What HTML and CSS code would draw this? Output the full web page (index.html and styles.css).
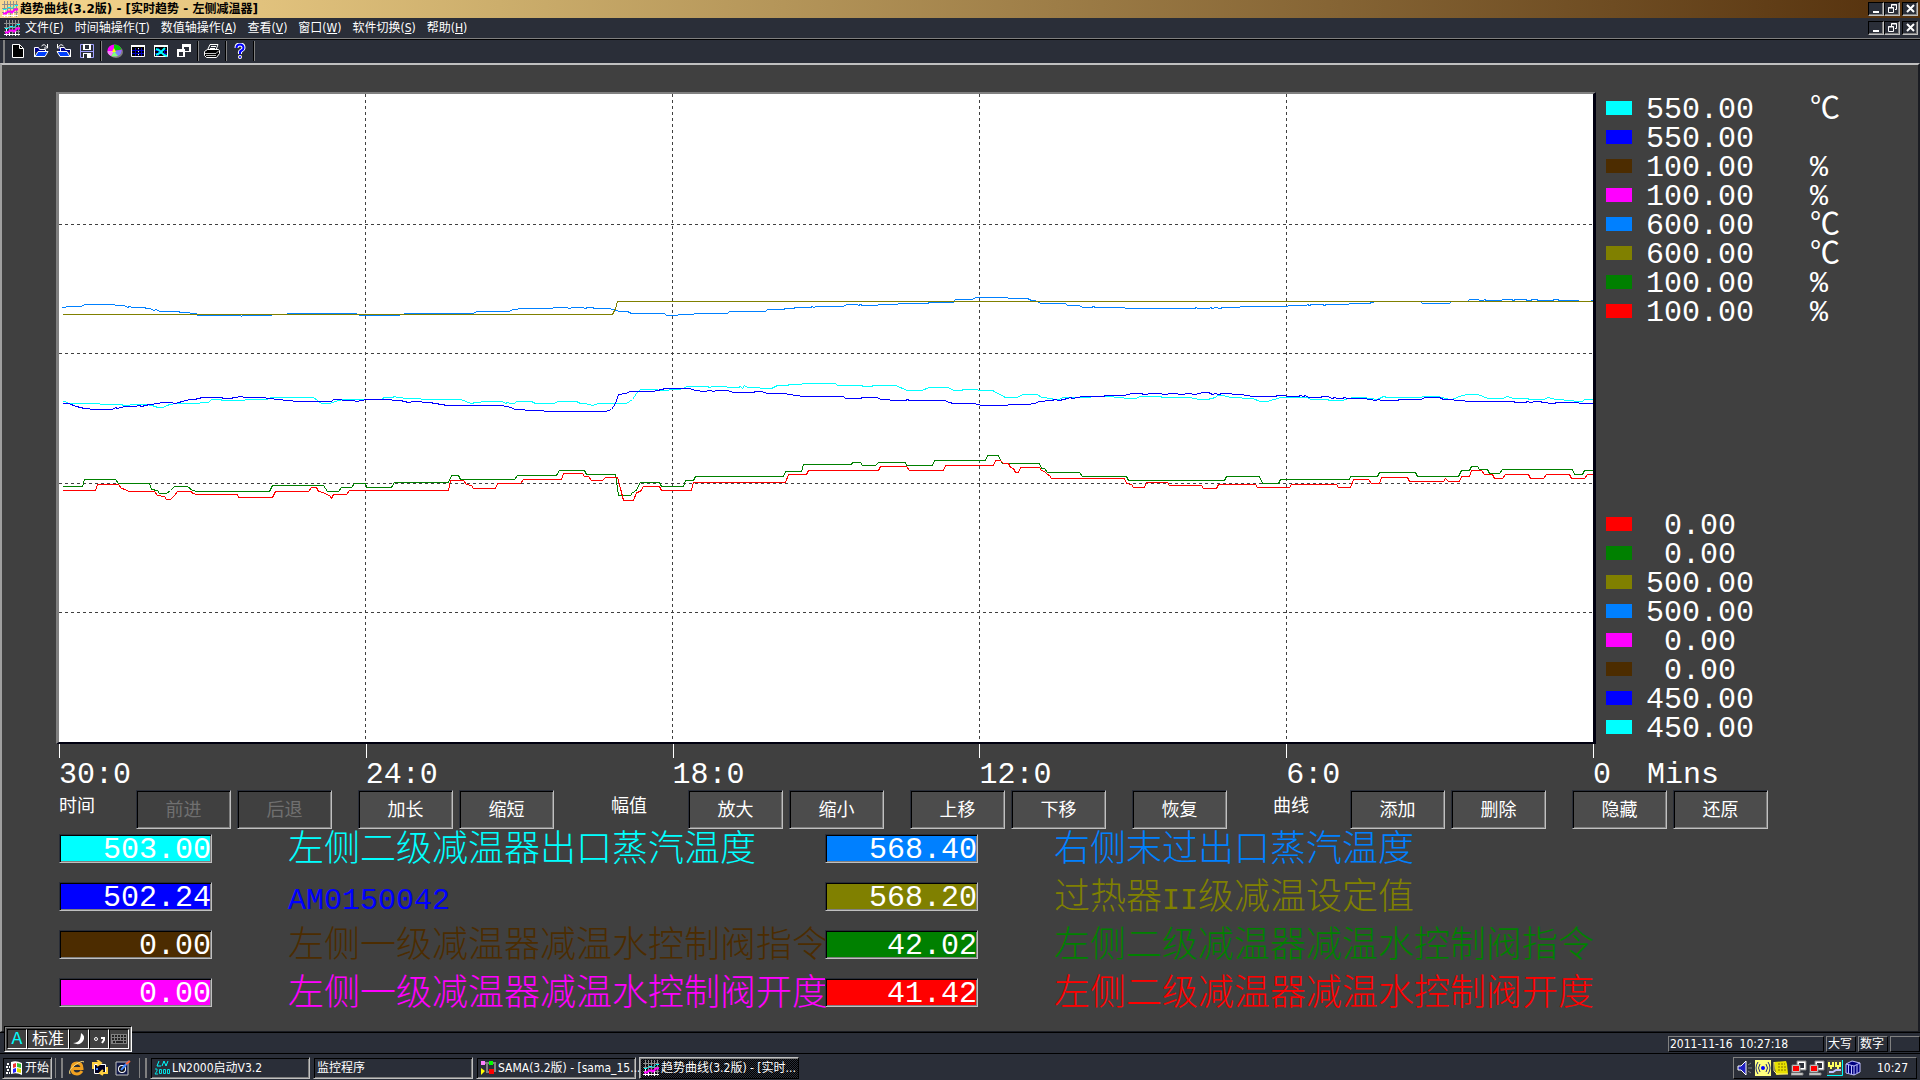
FILE: index.html
```html
<!DOCTYPE html>
<html lang="zh-CN">
<head>
    <meta charset="UTF-8">
    <meta name="viewport" content="width=device-width, initial-scale=1.0">
    <title>趋势曲线(3.2版) - [实时趋势 - 左侧减温器]</title>
    <link rel="stylesheet" href="styles.css">
</head>
<body>

    <!-- Shared icons -->
    <svg class="defs" aria-hidden="true">
        <symbol id="i-trend" viewBox="0 0 16 16">
            <path d="M0 3.500h16M0 7.500h16M0 11.500h16M0 14.500h16" stroke="#909090"/>
            <path d="M2.500 0v16M5.500 0v16M8.500 0v16M11.500 0v16M14.500 0v16" stroke="#909090"/>
            <path d="M0 14.500h16M2.500 8v8M5.500 10v6M11.500 10v6" stroke="#fff"/>
            <path d="M1 8.500h3l2-2h3l1 1 3-3h3" stroke="#00ffff" fill="none"/>
            <path d="M1 12.500h3l2-2h3l1 1 3-3h3" stroke="#ff00ff" stroke-width="2" fill="none"/>
        </symbol>
        <symbol id="i-min" viewBox="0 0 12 10">
            <path d="M2 8h6" stroke="#fff" stroke-width="2"/>
        </symbol>
        <symbol id="i-restore" viewBox="0 0 12 10">
            <path d="M4.500 3V.5h5v5H8M4 1h6" stroke="#fff" fill="none"/>
            <path d="M1.500 3.500h5v5h-5zM1 4h6" stroke="#fff" fill="none"/>
        </symbol>
        <symbol id="i-close" viewBox="0 0 12 10">
            <path d="M2 1l7 7M9 1L2 8" stroke="#fff" stroke-width="2"/>
        </symbol>
        <symbol id="i-pc" viewBox="0 0 16 16">
            <path d="M6 1h9v9H6z" fill="#fff" stroke="#808080"/>
            <path d="M8 3h5v5H8z" fill="#2a2e38"/>
            <path d="M1 5h8v7H1zM0 13h12v2H0z" fill="#fff" stroke="#808080"/>
            <path d="M2 6h6v5H2z" fill="#f00"/>
        </symbol>
    </svg>

    <header class="titlebar">
        <svg class="icon"><use href="#i-trend"/></svg>
        <h1>趋势曲线(3.2版) - [实时趋势 - 左侧减温器]</h1>
        <div class="window-buttons">
            <button class="bevel" aria-label="最小化"><svg><use href="#i-min"/></svg></button>
            <button class="bevel" aria-label="还原"><svg><use href="#i-restore"/></svg></button>
            <button class="bevel close" aria-label="关闭"><svg><use href="#i-close"/></svg></button>
        </div>
    </header>

    <nav class="menubar">
        <svg class="icon"><use href="#i-trend"/></svg>
        <button>文件(<u>F</u>)</button>
        <button>时间轴操作(<u>T</u>)</button>
        <button>数值轴操作(<u>A</u>)</button>
        <button>查看(<u>V</u>)</button>
        <button>窗口(<u>W</u>)</button>
        <button>软件切换(<u>S</u>)</button>
        <button>帮助(<u>H</u>)</button>
        <div class="window-buttons">
            <button class="bevel" aria-label="最小化子窗口"><svg><use href="#i-min"/></svg></button>
            <button class="bevel" aria-label="还原子窗口"><svg><use href="#i-restore"/></svg></button>
            <button class="bevel close" aria-label="关闭子窗口"><svg><use href="#i-close"/></svg></button>
        </div>
    </nav>

    <div class="toolbar">
        <button aria-label="新建">
            <svg viewBox="0 0 16 16"><path d="M2.500 1.500h7l4 4v9h-11z" fill="#000" stroke="#fff"/><path d="M9.500 1.500v4h4" fill="none" stroke="#fff"/></svg>
        </button>
        <button aria-label="打开">
            <svg viewBox="0 0 16 16"><path d="M1 4h5l1 2h6v3H1z" fill="#008"/><path d="M1.500 14V4.500h4l1 2h6V8" fill="none" stroke="#fff"/><path d="M2 13.500L5 8.500h10l-3 5z" fill="#0040ff" stroke="#fff"/><path d="M8.500 3q3-3 5 1M14.500 1v4H11" fill="none" stroke="#fff"/></svg>
        </button>
        <button aria-label="导入">
            <svg viewBox="0 0 16 16"><path d="M3 4h5l1 2h6v3H3z" fill="#008"/><path d="M14.500 14V6.500h-5l-1-2h-4V8" fill="none" stroke="#fff"/><path d="M14 13.500L11 8.500H1l3 5z" fill="#0040ff" stroke="#fff"/><path d="M7.500 3q-3-3-5 1M1.500 1v4H5" fill="none" stroke="#fff"/></svg>
        </button>
        <button aria-label="保存">
            <svg viewBox="0 0 16 16"><path d="M1.500 1.500h13v13h-13z" fill="#2a2e38" stroke="#a0a0ff"/><path d="M4 1h8v6H4z" fill="#fff"/><path d="M6 2h4v4H6z" fill="#2a2e38"/><path d="M1 8.500h14" stroke="#a0a0ff"/><path d="M4 10h8v5H4z" fill="#fff"/><path d="M5 11h3v4H5z" fill="#2a2e38"/></svg>
        </button>
        <span class="divider"></span>
        <button aria-label="颜色">
            <svg viewBox="0 0 16 16"><ellipse cx="9" cy="9" rx="7" ry="6" fill="#808080"/><ellipse cx="7.500" cy="7.500" rx="7" ry="6" fill="#f0f"/><path d="M7 8V1.500q6 0 7.500 5z" fill="#00d000"/><path d="M7 8l7.500-1q0 5-4 6z" fill="#8080ff"/><path d="M7 8l4 5q-5 1-7 0z" fill="#80ff80"/><path d="M7 8l-3 5q-4-2-3.500-5z" fill="#ff80ff"/><path d="M7 5l2 4H5z" fill="#ff0"/></svg>
        </button>
        <button aria-label="表格">
            <svg viewBox="0 0 16 16"><path d="M1.500 2.500h13v11h-13z" fill="#000" stroke="#fff"/><path d="M1 3h14" stroke="#fff" stroke-width="2"/><path d="M2 7.500h12M2 10.500h12M5.500 5v8M8.500 5v8M11.500 5v8" stroke="#0000c0"/><path d="M8 5.500h1M8 8.500h1M8 11.500h1" stroke="#fff"/></svg>
        </button>
        <button aria-label="曲线">
            <svg viewBox="0 0 16 16"><path d="M1.500 2.500h13v11h-13z" fill="#000" stroke="#fff"/><path d="M1 3h14" stroke="#fff" stroke-width="2"/><path d="M2 7.500h12M2 10.500h12M5.500 5v8M11.500 5v8" stroke="#0000c0"/><path d="M3 6l3 1 5 5 3 1M3 12l4-2 5-5" stroke="#0ff" stroke-width="2" fill="none"/></svg>
        </button>
        <button aria-label="层叠">
            <svg viewBox="0 0 16 16"><path d="M6 1h9v8H6z" fill="#fff"/><path d="M8 4h5v4H8z" fill="#2a2e38"/><path d="M1 6h8v8H1z" fill="#fff"/><path d="M3 9h4v4H3z" fill="#2a2e38"/></svg>
        </button>
        <span class="divider"></span>
        <button aria-label="打印">
            <svg viewBox="0 0 16 16"><path d="M3.500 7L6 1.500h8L12 7" fill="#2a2e38" stroke="#fff"/><path d="M7 3.500h5M6 5.500h5" stroke="#fff"/><path d="M.5 8.500l3-2h11l1 1v3l-3 4h-10l-2-2z" fill="#000" stroke="#fff"/><path d="M1 10.500h11l3-3M2 12.500h10" stroke="#c0c0c0" fill="none"/></svg>
        </button>
        <span class="divider"></span>
        <button aria-label="帮助">
            <svg viewBox="0 0 16 16"><path d="M4.500 5q0-3.500 3.500-3.500T11.500 5q0 1.500-2 2.500T8 10v1" fill="none" stroke="#fff" stroke-width="4"/><path d="M4.500 5q0-3.500 3.500-3.500T11.500 5q0 1.500-2 2.500T8 10v1" fill="none" stroke="#0000ff" stroke-width="2"/><circle cx="8" cy="14" r="2" fill="#fff"/><circle cx="8" cy="14" r="1" fill="#00f"/></svg>
        </button>
        <span class="divider"></span>
    </div>

    <main class="client">
        <div class="trend">
            <div class="chart">
                <svg viewBox="0 0 1534 648" preserveAspectRatio="none" shape-rendering="crispEdges">
                    <g class="grid">
                        <path d="M306.500 0v648M613.500 0v648M920.500 0v648M1227.500 0v648"/>
                        <path d="M0 130.500h1534M0 259.500h1534M0 389.500h1534M0 518.500h1534"/>
                    </g>
                    <g class="curves" transform="translate(0.5 0.5)">
                        <polyline class="c-cyan" points="3,307 6,307 9,309 40,309 41,310 62,310 64,311 70,311 71,310 88,310 96,312 98,313 104,313 107,311 111,310 117,309 140,309 141,308 149,308 152,305 161,305 163,306 185,306 186,305 208,305 211,303 254,303 262,309 270,309 276,307 283,305 323,305 324,303 333,303 335,302 338,303 343,303 344,304 361,304 362,305 401,305 412,309 416,308 421,308 422,307 443,307 446,309 448,308 451,309 455,309 457,307 472,307 476,309 495,309 498,307 517,307 521,309 526,309 533,311 539,309 567,309 573,305 577,299 581,295 595,295 602,296 608,296 611,295 620,295 623,294 628,292 648,292 650,293 653,292 664,292 671,293 679,293 681,292 683,294 685,291 688,293 699,293 702,294 712,294 718,291 728,291 730,290 742,290 743,289 776,289 778,291 802,291 804,292 812,292 814,291 836,291 848,296 862,296 870,293 888,293 895,296 902,296 904,295 918,295 919,296 933,296 946,303 957,303 964,300 978,300 982,303 992,304 994,305 999,305 1004,303 1029,303 1034,302 1048,302 1061,303 1068,304 1076,304 1081,302 1101,302 1103,303 1130,303 1140,305 1148,305 1156,303 1158,301 1164,301 1171,303 1193,304 1201,307 1208,307 1221,303 1248,303 1251,305 1268,305 1270,306 1283,306 1289,304 1294,303 1304,303 1318,305 1324,302 1328,303 1359,303 1366,302 1378,302 1391,305 1396,304 1399,302 1408,300 1418,300 1429,304 1443,304 1448,302 1454,304 1468,304 1470,305 1484,305 1489,303 1496,305 1513,306 1516,307 1523,307 1525,305 1534,305"/>
                        <polyline class="c-blue" points="3,309 9,309 17,312 25,314 36,315 53,315 56,313 58,314 65,312 75,312 80,311 82,312 90,310 99,309 102,308 111,308 116,309 119,308 123,307 130,305 135,305 143,303 161,303 165,304 171,304 175,303 182,302 185,303 202,303 218,305 228,306 238,307 272,307 274,305 281,305 284,306 294,306 297,307 307,305 331,305 334,306 341,306 349,308 355,307 370,308 388,311 442,311 452,313 455,315 475,316 493,317 546,317 552,315 556,309 559,300 566,299 571,297 593,297 598,296 606,294 630,294 636,296 644,297 651,296 654,297 657,296 668,296 674,298 694,298 696,297 702,297 708,299 725,299 736,301 744,302 784,302 786,304 801,304 803,303 818,303 821,305 839,306 846,306 848,305 850,306 886,306 889,308 895,309 915,309 922,311 948,311 949,310 968,310 976,309 979,307 993,306 995,305 1000,306 1008,304 1011,303 1013,304 1023,302 1044,302 1046,301 1065,301 1072,299 1081,299 1085,300 1093,299 1101,299 1104,300 1113,299 1123,300 1128,299 1136,300 1143,298 1149,298 1153,300 1156,299 1159,300 1163,299 1181,300 1188,301 1193,302 1216,302 1218,301 1224,301 1229,302 1239,302 1241,301 1244,302 1246,301 1249,303 1261,303 1263,302 1268,302 1273,304 1275,303 1278,304 1283,304 1285,303 1288,304 1304,304 1316,306 1319,305 1322,306 1338,306 1340,305 1361,305 1366,303 1380,303 1384,305 1404,306 1407,307 1454,307 1456,308 1466,308 1468,307 1471,308 1476,307 1481,307 1483,308 1494,309 1498,308 1518,308 1521,309 1534,309"/>
                        <polyline class="c-sky" points="3,213 11,212 22,212 25,210 55,210 56,211 65,211 68,213 70,212 73,213 85,213 87,214 91,214 94,216 97,215 100,217 119,217 121,218 130,218 131,219 137,219 138,221 181,221 182,222 183,221 212,221 213,220 227,220 228,219 297,219 300,221 338,221 347,219 414,219 417,217 450,217 453,215 457,215 460,214 493,214 494,213 507,213 510,214 513,213 523,213 526,214 528,213 533,213 535,214 550,214 557,216 560,217 568,217 572,219 605,219 607,221 618,221 619,220 634,220 635,219 668,219 670,217 706,217 708,215 724,215 726,214 734,214 736,213 751,213 753,212 754,213 757,212 784,212 787,210 798,210 799,211 801,210 803,211 818,211 819,210 838,210 839,209 868,209 870,208 894,208 896,205 913,205 916,203 948,203 949,204 968,204 972,206 976,206 981,209 1006,209 1008,211 1020,211 1023,213 1032,213 1034,212 1036,213 1065,213 1066,214 1135,214 1137,213 1138,214 1150,214 1151,213 1153,214 1156,213 1161,214 1163,213 1180,213 1181,212 1228,212 1229,211 1247,211 1248,210 1250,211 1252,210 1263,210 1265,211 1267,210 1289,210 1290,209 1310,209 1312,208 1318,207 1361,207 1363,209 1390,209 1392,207 1408,207 1410,205 1419,205 1420,206 1424,206 1425,205 1427,206 1442,206 1443,205 1452,205 1454,206 1456,205 1466,205 1468,206 1471,206 1473,205 1477,205 1479,206 1493,206 1495,205 1498,205 1500,206 1518,206 1520,207 1531,207 1534,205"/>
                        <polyline class="c-olive" points="3,220 553,220 556,214 558,207 1534,207"/>
                        <polyline class="c-green" points="3,392 23,392 25,385 56,385 59,389 90,389 92,395 98,396 100,399 107,399 111,396 115,392 128,392 133,396 138,397 210,397 213,391 264,391 268,397 279,397 282,393 292,393 295,389 306,389 307,393 332,393 335,388 389,388 392,381 399,381 401,385 455,385 458,381 497,381 500,376 525,376 527,380 556,380 559,401 571,401 573,398 576,397 581,388 600,388 602,392 624,392 626,386 634,386 636,382 724,382 726,377 742,377 744,370 792,370 793,368 801,368 803,371 816,371 819,368 846,368 847,371 873,371 875,366 926,366 928,361 939,361 941,366 943,369 980,369 982,374 985,374 988,378 1020,378 1023,382 1067,382 1069,386 1165,386 1167,382 1200,382 1203,389 1219,389 1221,385 1290,385 1291,382 1318,382 1320,378 1356,378 1358,382 1399,382 1402,376 1410,376 1412,372 1418,372 1420,375 1428,375 1430,379 1440,379 1443,375 1513,375 1515,380 1523,380 1525,376 1534,376"/>
                        <polyline class="c-red" points="3,396 36,396 38,390 59,390 62,394 66,395 69,397 95,397 98,401 105,402 107,405 111,405 113,403 115,401 118,397 132,397 133,399 138,400 178,400 179,403 213,403 216,397 249,397 252,393 257,393 259,397 264,398 267,400 270,401 272,404 274,400 287,400 290,396 389,396 391,386 404,386 407,390 412,391 414,394 436,394 438,389 461,389 464,385 502,385 504,379 523,379 525,382 529,382 532,386 543,386 546,383 558,383 561,394 564,406 574,406 577,398 581,397 584,392 600,392 602,396 632,396 634,388 726,388 729,380 747,380 749,376 819,376 821,372 847,372 850,376 884,376 886,371 934,371 936,366 941,366 944,369 949,369 951,373 954,374 956,378 959,378 961,373 980,373 982,376 985,377 988,380 990,381 992,384 1065,384 1067,389 1072,390 1074,393 1085,393 1087,388 1108,388 1110,391 1142,391 1144,394 1157,394 1159,390 1196,390 1198,393 1230,393 1232,390 1277,390 1279,393 1291,393 1294,385 1309,385 1312,389 1320,389 1322,383 1348,383 1350,387 1384,387 1386,384 1389,387 1400,387 1402,382 1410,382 1412,376 1422,376 1425,380 1433,380 1435,384 1443,384 1446,380 1469,380 1471,384 1484,384 1487,380 1510,380 1512,384 1525,384 1528,380 1534,380"/>
                    </g>
                </svg>
            </div>
            <div class="scales">
                <ul>
                    <li class="cyan"><i></i><b>550.00</b><span>℃</span></li>
                    <li class="blue"><i></i><b>550.00</b></li>
                    <li class="brown"><i></i><b>100.00</b><span>%</span></li>
                    <li class="magenta"><i></i><b>100.00</b><span>%</span></li>
                    <li class="sky"><i></i><b>600.00</b><span>℃</span></li>
                    <li class="olive"><i></i><b>600.00</b><span>℃</span></li>
                    <li class="green"><i></i><b>100.00</b><span>%</span></li>
                    <li class="red"><i></i><b>100.00</b><span>%</span></li>
                </ul>
                <ul>
                    <li class="red"><i></i><b>0.00</b></li>
                    <li class="green"><i></i><b>0.00</b></li>
                    <li class="olive"><i></i><b>500.00</b></li>
                    <li class="sky"><i></i><b>500.00</b></li>
                    <li class="magenta"><i></i><b>0.00</b></li>
                    <li class="brown"><i></i><b>0.00</b></li>
                    <li class="blue"><i></i><b>450.00</b></li>
                    <li class="cyan"><i></i><b>450.00</b></li>
                </ul>
            </div>
        </div>

        <div class="axis">
            <span>30:0</span>
            <span>24:0</span>
            <span>18:0</span>
            <span>12:0</span>
            <span>6:0</span>
            <span>0 &nbsp;Mins</span>
        </div>

        <div class="controls">
            <div class="group">
                <span class="caption">时间</span>
                <button class="bevel" disabled>前进</button>
                <button class="bevel" disabled>后退</button>
            </div>
            <div class="group">
                <button class="bevel">加长</button>
                <button class="bevel">缩短</button>
            </div>
            <div class="group amplitude">
                <span class="caption">幅值</span>
                <button class="bevel">放大</button>
                <button class="bevel">缩小</button>
            </div>
            <div class="group">
                <button class="bevel">上移</button>
                <button class="bevel">下移</button>
            </div>
            <div class="group">
                <button class="bevel">恢复</button>
            </div>
            <div class="group curve">
                <span class="caption">曲线</span>
                <button class="bevel">添加</button>
                <button class="bevel">删除</button>
            </div>
            <div class="group">
                <button class="bevel">隐藏</button>
                <button class="bevel">还原</button>
            </div>
        </div>

        <div class="readings">
            <output id="v1" class="bevel cyan">503.00</output>
            <label for="v1" class="cyan">左侧二级减温器出口蒸汽温度</label>
            <output id="v5" class="bevel sky">568.40</output>
            <label for="v5" class="sky">右侧末过出口蒸汽温度</label>

            <output id="v2" class="bevel blue">502.24</output>
            <label for="v2" class="blue"><span class="latin">AM0150042</span></label>
            <output id="v6" class="bevel olive">568.20</output>
            <label for="v6" class="olive">过热器<span class="latin">II</span>级减温设定值</label>

            <output id="v3" class="bevel brown">0.00</output>
            <label for="v3" class="brown">左侧一级减温器减温水控制阀指令</label>
            <output id="v7" class="bevel green">42.02</output>
            <label for="v7" class="green">左侧二级减温器减温水控制阀指令</label>

            <output id="v4" class="bevel magenta">0.00</output>
            <label for="v4" class="magenta">左侧一级减温器减温水控制阀开度</label>
            <output id="v8" class="bevel red">41.42</output>
            <label for="v8" class="red">左侧二级减温器减温水控制阀开度</label>
        </div>
    </main>

    <footer class="statusbar">
        <span class="date">2011-11-16&nbsp; 10:27:18</span>
        <span>大写</span>
        <span>数字</span>
        <span></span>

        <!-- Input method bar floats over the status bar -->
        <div class="ime">
            <button class="letter">A</button>
            <button class="mode">标准</button>
            <button aria-label="半角"><svg viewBox="0 0 16 16"><path d="M10 2q5 3 2 8t-10 2q5 0 7-4 1-3 1-6z" fill="#fff"/></svg></button>
            <button aria-label="标点"><svg viewBox="0 0 16 16"><circle cx="5" cy="8" r="1.500" fill="none" stroke="#fff"/><path d="M10 7h3v2l-2 3" fill="none" stroke="#fff" stroke-width="2"/></svg></button>
            <button class="keyboard" aria-label="软键盘"><svg viewBox="0 0 16 16"><path d="M0 3h16v10H0z" fill="#808080"/><path d="M1 5h14M1 8h14" stroke="#222" stroke-width="2" stroke-dasharray="2 1"/><path d="M2 11h2M5 11h7M13 11h2" stroke="#222" stroke-width="2"/></svg></button>
        </div>
    </footer>

    <div class="taskbar">
        <button class="bevel start">
            <svg viewBox="0 0 18 16"><path d="M5 2q5-2 11 1v12q-5-3-11-1z" fill="#fff"/><path d="M7 4l3-1v4L7 8z" fill="#e33"/><path d="M11 3l4 1v4l-4-1z" fill="#3b3"/><path d="M7 9l3-1v4l-3 1z" fill="#22f"/><path d="M11 8l4 1v4l-4-1z" fill="#dd0"/><path d="M1 4h3M0 7h4M1 10h3M0 13h4" stroke="#fff" stroke-width="2" stroke-dasharray="2 1"/></svg>
            开始
        </button>
        <span class="grip"></span>
        <div class="quick-launch">
            <button aria-label="浏览器"><svg viewBox="0 0 16 16"><path d="M13 11q-2 3-5 3-5 0-5-5.500T8 3q5 0 5 5.500H4" fill="none" stroke="#f0a020" stroke-width="3"/><path d="M1 14Q-1 10 6 5t9-3" fill="none" stroke="#ffe080"/></svg></button>
            <button aria-label="邮件"><svg viewBox="0 0 16 16"><path d="M2.500 4.500h11v9h-11z" fill="#002" stroke="#fff"/><path d="M1 9V3h7M5 0l4 3-4 3" fill="none" stroke="#ffd040" stroke-width="2"/><path d="M15 7v6H9M11 10l-3 3 3 2" fill="none" stroke="#ffd040" stroke-width="2"/><path d="M4 8h2v2H4z" fill="#48f"/></svg></button>
            <button aria-label="显示桌面"><svg viewBox="0 0 16 16"><path d="M1 2h12v13H1z" fill="#101848" stroke="#c0c0c0"/><circle cx="7" cy="9" r="4" fill="#fff"/><circle cx="7" cy="9" r="3" fill="#111"/><path d="M6 10l8-9" stroke="#48f" stroke-width="2"/><path d="M11 4l4-3" stroke="#f63" stroke-width="2"/></svg></button>
        </div>
        <span class="grip"></span>

        <button class="bevel task">
            <svg viewBox="0 0 16 16"><path d="M5 1L3 6h4M8 6l2-5 2 5 2-5" fill="none" stroke="#0ff"/><path d="M1 9h2v2l-2 3h3M5.500 9.500h2v4h-2zM9.500 9.500h2v4h-2zM13.500 9.500h2v4h-2z" fill="none" stroke="#00e0e0"/></svg>
            LN2000启动V3.2
        </button>
        <button class="bevel task">监控程序</button>
        <button class="bevel task">
            <svg viewBox="0 0 16 16"><path d="M5 3h4M7 3v9h3M13 3h2v9" fill="none" stroke="#808080" stroke-width="2"/><path d="M1 1h4v4H1z" fill="#ff80ff"/><path d="M9 1h4v4H9z" fill="#0f0"/><path d="M1 8l4 3-4 4z" fill="#ff0"/><path d="M9 9h5v5H9z" fill="#f00"/></svg>
            SAMA(3.2版) - [sama_15...
        </button>
        <button class="bevel task active">
            <svg><use href="#i-trend"/></svg>
            趋势曲线(3.2版) - [实时...
        </button>

        <div class="tray">
            <svg viewBox="0 0 16 16"><path d="M1 6h3l5-5v14L4 10H1z" fill="#2020c0" stroke="#fff"/><path d="M11 5l3-2M11 8h4M11 11l3 2" stroke="#808080"/></svg>
            <svg viewBox="0 0 16 16"><path d="M0 0h16v16H0z" fill="#ffff80"/><circle cx="8" cy="8" r="2" fill="#00f"/><path d="M5 4q-3 4 0 8M11 4q3 4 0 8M3 2q-4 6 0 12M13 2q4 6 0 12" fill="none" stroke="#222a80"/></svg>
            <svg viewBox="0 0 16 16"><path d="M1 2l12-1 1 3 1 10-12 1z" fill="#e8e000"/><path d="M5 4h7M5 7h8M5 10h8" stroke="#807000" stroke-dasharray="2 1"/><path d="M1 2v9l3 3h11" fill="none" stroke="#fff080"/></svg>
            <svg><use href="#i-pc"/></svg>
            <svg><use href="#i-pc"/></svg>
            <svg viewBox="0 0 16 16"><path d="M0 0h16v16H0z" fill="#444"/><path d="M2 2v4h4V2M9 2v4h4V2M4 6v3M11 6v3" fill="none" stroke="#ffff60" stroke-width="2"/><path d="M2 12h4l3-2h5" fill="none" stroke="#c0c0ff" stroke-width="2"/><path d="M15.500 0v15.500H0" fill="none" stroke="#0ff"/></svg>
            <svg viewBox="0 0 16 16"><path d="M1 4l6-3 8 2v9l-6 3-8-2z" fill="#000080" stroke="#c0c0ff"/><path d="M1 4l8 2 6-3M9 6v9M3.500 5v8M6.500 6v8M12 5v8" fill="none" stroke="#c0c0ff"/></svg>
            <time>10:27</time>
        </div>
    </div>

</body>
</html>
```
FILE: styles.css
```css
* {
    box-sizing: border-box;
}

body {
    margin: 0;
    height: 100vh;
    display: flex;
    flex-direction: column;
    overflow: hidden;
    background-color: #2a2e38;
    color: #fff;
    font-family: "DejaVu Sans Condensed", "Liberation Sans", "Noto Sans CJK SC", sans-serif;
    font-size: 12px;
    line-height: 16px;
}

button {
    padding: 0;
    border: 0;
    background: none;
    color: inherit;
    font: inherit;
    white-space: nowrap;
}

svg {
    display: block;
}

.defs {
    position: absolute;
    width: 0;
    height: 0;
}

.icon {
    width: 16px;
    height: 16px;
}

.bevel {
    border: 1px solid;
    border-color: #2a2e38 #c0c0c0 #c0c0c0 #2a2e38;
    box-shadow: inset 1px 1px #000, inset -1px -1px #808080;
}

/* Title and menu */
.titlebar {
    display: flex;
    align-items: center;
    height: 18px;
    padding: 0 2px;
    background: linear-gradient(to right, #f8d890, #ccae6c 26%, #6e4c22 84%, #54300c);
    color: #000;
}

.titlebar h1 {
    margin: 0 0 0 2px;
    font-family: "DejaVu Sans", "Noto Sans CJK SC", sans-serif;
    font-size: 12px;
    font-weight: bold;
}

.menubar {
    display: flex;
    align-items: center;
    gap: 11px;
    height: 22px;
    padding: 0 2px 2px 4px;
    border-bottom: 1px solid #000;
    box-shadow: inset 0 -1px #808080;
}

.menubar .icon {
    margin-right: -6px;
}

.window-buttons {
    display: flex;
    margin-left: auto;
}

.window-buttons button {
    width: 16px;
    height: 14px;
    border-color: #000 #c0c0c0 #c0c0c0 #000;
    box-shadow: inset -1px -1px #808080;
    background-color: #2a2e38;
}

.window-buttons svg {
    width: 12px;
    height: 10px;
    margin-left: 2px;
}

.window-buttons .close {
    margin-left: 2px;
}

.toolbar {
    display: flex;
    align-items: center;
    gap: 7px;
    height: 23px;
    margin-left: 3px;
    padding: 0 0 2px 5px;
    border-left: 2px solid #808080;
}

.toolbar svg {
    width: 16px;
    height: 16px;
}

.divider {
    width: 2px;
    height: 20px;
    margin: 0 -2px;
    border-left: 1px solid #000;
    border-right: 1px solid #808080;
}

/* Trend window */
.client {
    flex: 1;
    min-height: 0;
    display: flex;
    flex-direction: column;
    padding: 27px 0 24px;
    border: 2px solid;
    border-color: #c0c0c0 #1a1c22 #1a1c22 #a0a0a0;
    border-bottom-width: 1px;
    background-color: #404040;
    font-family: "Liberation Mono", "Noto Sans CJK SC", monospace;
}

.trend {
    flex: 1;
    min-height: 0;
    display: grid;
    grid-template-columns: 1fr 322px;
    grid-template-rows: 100%;
    padding-left: 54px;
}

.chart {
    border: 3px solid;
    border-width: 2px 3px 2px 3px;
    border-color: #808080 #000010 #000010 #808080;
    background-color: #fff;
}

.chart svg {
    width: 100%;
    height: 100%;
}

.grid {
    stroke: #404040;
    stroke-dasharray: 3 3;
}

.curves {
    fill: none;
}

.c-cyan { stroke: #00ffff; }
.c-blue { stroke: #0000ff; }
.c-sky { stroke: #0080ff; }
.c-olive { stroke: #808000; }
.c-green { stroke: #008000; }
.c-red { stroke: #ff0000; }

.cyan { --pen: #00ffff; }
.blue { --pen: #0000ff; }
.brown { --pen: #4c2c00; }
.magenta { --pen: #ff00ff; }
.sky { --pen: #0080ff; }
.olive { --pen: #808000; }
.green { --pen: #008000; }
.red { --pen: #ff0000; }

.scales {
    display: flex;
    flex-direction: column;
    justify-content: space-between;
    padding: 0 0 2px 10px;
}

.scales ul {
    margin: 0;
    padding: 2px 0 0;
    list-style: none;
}

.scales li {
    display: grid;
    grid-template-columns: 26px 108px 36px;
    column-gap: 14px;
    align-items: start;
    height: 29px;
    font-size: 30px;
    line-height: 33px;
}

.scales i {
    height: 14px;
    margin-top: 7px;
    background-color: var(--pen);
}

.scales b {
    font-weight: normal;
    text-align: center;
}

.scales span {
    margin-left: 42px;
}

.axis {
    display: grid;
    grid-template-columns: repeat(5, 1fr) 325px;
    padding-left: 57px;
    font-size: 30px;
    line-height: 30px;
}

.axis span::before {
    content: "";
    display: block;
    width: 1px;
    height: 14px;
    margin-bottom: 2px;
    background-color: #fff;
}

.controls {
    display: flex;
    gap: 26px;
    padding-left: 57px;
    font-size: 18px;
}

.group {
    display: flex;
    gap: 6px;
}

.amplitude {
    margin-left: 31px;
}

.curve {
    margin-left: 20px;
}

.caption {
    width: 71px;
    line-height: 34px;
}

.controls button {
    width: 95px;
    height: 39px;
    padding-top: 3px;
    background-color: #4c4c4c;
}

.controls button:disabled {
    background-color: #404040;
    color: #707070;
}

.readings {
    display: grid;
    grid-template-columns: 153px 613fr 153px 940fr;
    row-gap: 19px;
    margin-top: 5px;
    padding-left: 57px;
}

.readings output {
    height: 29px;
    background-color: var(--pen);
    font-size: 30px;
    line-height: 31px;
    text-align: right;
}

.readings label {
    min-width: 0;
    height: 29px;
    padding-left: 76px;
    color: var(--pen);
    font-size: 36px;
    font-weight: 300;
    line-height: 36px;
    white-space: nowrap;
}

.latin {
    font-size: 30px;
    font-weight: normal;
}

/* Status bar */
.statusbar {
    position: relative;
    display: flex;
    justify-content: flex-end;
    gap: 2px;
    height: 21px;
    padding: 3px 0 1px;
    border-top: 1px solid #000;
}

.statusbar > span {
    width: 30px;
    padding-left: 1px;
    border: 1px solid;
    border-color: #808080 #000 #000 #808080;
    font-size: 12px;
    line-height: 14px;
    white-space: nowrap;
}

.statusbar > .date {
    width: 156px;
}

.ime {
    position: absolute;
    left: 4px;
    bottom: 1px;
    display: flex;
    height: 26px;
    padding: 2px;
    border: 1px solid;
    border-color: #000 #fff #fff #000;
    box-shadow: inset -1px -1px #808080, inset 1px 1px #808080;
    background-color: #404040;
}

.ime button {
    width: 20px;
    border: 1px solid;
    border-color: #000 #fff #fff #000;
}

.ime svg {
    width: 16px;
    height: 16px;
    margin-left: 1px;
}

.ime .letter {
    color: #00ffff;
    font-family: "Liberation Mono", monospace;
    font-size: 18px;
}

.ime .mode {
    width: 42px;
    font-size: 16px;
}

/* Task bar */
.taskbar {
    display: flex;
    align-items: center;
    gap: 3px;
    height: 27px;
    padding: 1px 3px 0 2px;
    border-top: 1px solid #000;
}

.taskbar svg {
    flex: none;
    width: 16px;
    height: 16px;
}

.start {
    display: flex;
    align-items: center;
    gap: 1px;
    width: 50px;
    height: 22px;
    padding-left: 3px;
}

.start svg {
    width: 18px;
}

.grip {
    width: 8px;
    height: 20px;
    border: solid #808080;
    border-width: 0 2px 0 1px;
}

.quick-launch {
    display: flex;
    gap: 7px;
    padding: 0 5px 0 3px;
}

.task {
    display: flex;
    align-items: center;
    gap: 2px;
    width: 160px;
    height: 22px;
    padding: 0 3px;
}

.active {
    border-color: #c0c0c0 #000 #000 #c0c0c0;
    box-shadow: inset 1px 1px #808080;
    background: repeating-conic-gradient(#000 0 25%, #2a2e38 0 50%) 0 0 / 2px 2px;
}

.tray {
    display: flex;
    align-items: center;
    gap: 2px;
    width: 184px;
    height: 22px;
    margin-left: auto;
    padding-left: 3px;
    border: 1px solid;
    border-color: #808080 #000 #000 #808080;
}

.tray time {
    margin-left: 14px;
    white-space: nowrap;
}
```
